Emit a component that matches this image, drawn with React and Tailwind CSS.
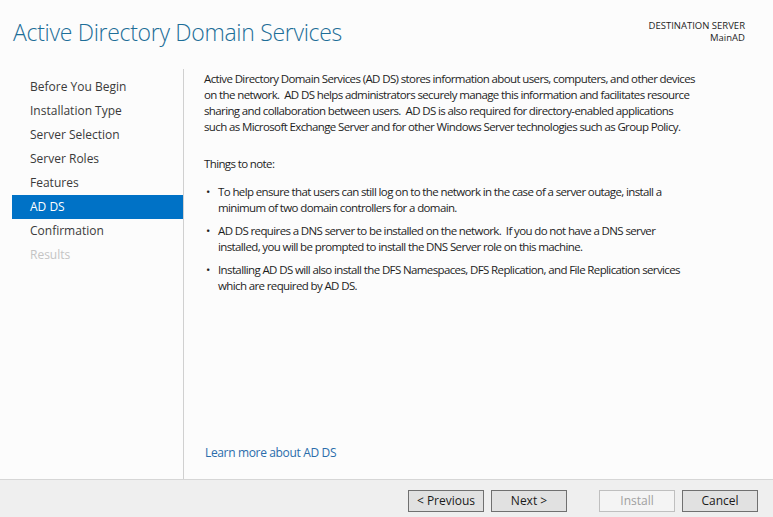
import React from 'react';

const steps = [
  { label: 'Before You Begin' },
  { label: 'Installation Type' },
  { label: 'Server Selection' },
  { label: 'Server Roles' },
  { label: 'Features' },
  { label: 'AD DS', active: true },
  { label: 'Confirmation' },
  { label: 'Results', disabled: true },
];

const sp = '\u00a0 ';

const notes = [
  ['To help ensure that users can still log on to the network in the case of a server outage, install a', 'minimum of two domain controllers for a domain.'],
  [`AD DS requires a DNS server to be installed on the network.${sp}If you do not have a DNS server`, 'installed, you will be prompted to install the DNS Server role on this machine.'],
  ['Installing AD DS will also install the DFS Namespaces, DFS Replication, and File Replication services', 'which are required by AD DS.'],
];

function WizardButton({ children, disabled }) {
  return (
    <button
      className={`w-[76px] h-[22px] border text-[12px] leading-none ${disabled ? 'border-[#bfbfbf] bg-[#f4f4f4] text-[#a0a0a0]' : 'border-[#707070] bg-[#e1e1e1] text-[#1a1a1a]'}`}
    >
      {children}
    </button>
  );
}

export default function App() {
  return (
    <div className="w-[773px] h-[517px] flex flex-col bg-[#fcfcfc] text-[#1e1e1e] overflow-hidden" style={{ fontFamily: '"Open Sans", "Noto Sans", sans-serif' }}>
      <div className="flex justify-between pl-[13px] pr-[28px] pt-[16px] h-[69px]">
        <h1 className="text-[23px] font-light leading-[32px] text-[#1d6e98] tracking-[-0.3px]">Active Directory Domain Services</h1>
        <div className="text-right text-[9.5px] leading-[12px] text-[#1e1e1e] pt-[4px]">
          <div>DESTINATION SERVER</div>
          <div>MainAD</div>
        </div>
      </div>

      <div className="flex flex-1">
        <div className="w-[184px] pl-[12px] pt-[6px] pb-[20px] border-r border-[#d0d0d0]">
          {steps.map((s) => (
            <div
              key={s.label}
              className={`h-[24px] pl-[18px] flex items-center text-[12px] ${s.active ? 'bg-[#0072c6] text-white' : s.disabled ? 'text-[#c4c4c4]' : 'text-[#3a3a3a]'}`}
            >
              {s.label}
            </div>
          ))}
        </div>

        <div className="flex-1 flex flex-col pl-[20px] pr-[12px] pt-[2px] pb-[18px] text-[11.5px] leading-[16px] tracking-[-0.62px]">
          <p>
            Active Directory Domain Services (AD DS) stores information about users, computers, and other devices<br />
            on the network.{sp}AD DS helps administrators securely manage this information and facilitates resource<br />
            sharing and collaboration between users.{sp}AD DS is also required for directory-enabled applications<br />
            such as Microsoft Exchange Server and for other Windows Server technologies such as Group Policy.
          </p>
          <p className="mt-[21px]">Things to note:</p>
          <ul className="mt-[12px] flex flex-col gap-[7px]">
            {notes.map((n, i) => (
              <li key={i} className="flex">
                <span className="w-[14px] pl-[2px] tracking-normal">•</span>
                <span>{n[0]}<br />{n[1]}</span>
              </li>
            ))}
          </ul>
          <div className="flex-1" />
          <a className="text-[12px] text-[#2a6cab] tracking-[-0.35px] pl-[1px]">Learn more about AD DS</a>
        </div>
      </div>

      <div className="h-[38px] bg-[#efefef] border-t border-[#d6d6d6] flex items-start pt-[10px] pl-[408px] gap-[7px]">
        <WizardButton>&lt; Previous</WizardButton>
        <WizardButton>Next &gt;</WizardButton>
        <div className="w-[18px]" />
        <WizardButton disabled>Install</WizardButton>
        <WizardButton>Cancel</WizardButton>
      </div>
    </div>
  );
}
